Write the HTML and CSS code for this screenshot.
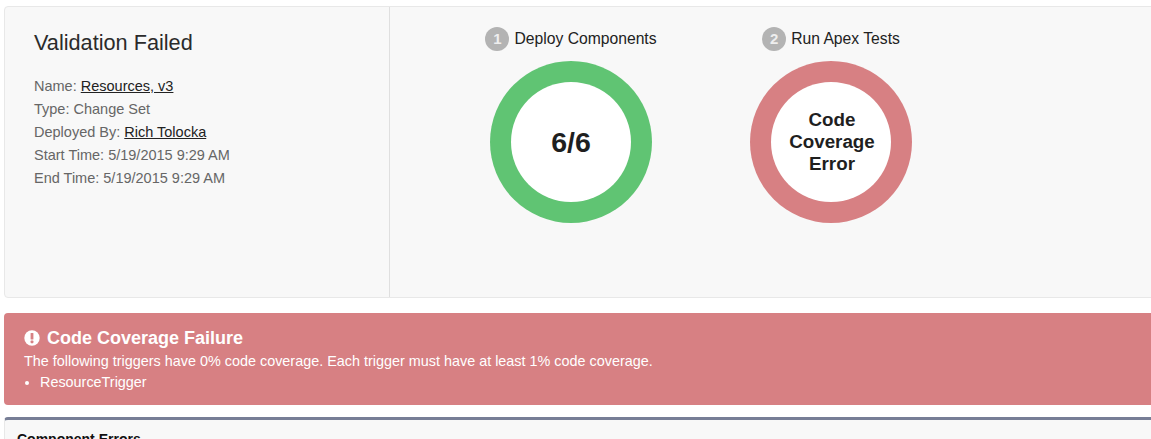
FILE: index.html
```html
<!DOCTYPE html>
<html lang="en">
<head>
    <meta charset="UTF-8">
    <title>Deployment Status</title>
    <link rel="stylesheet" href="styles.css">
</head>
<body>
<div class="status-panel">
    <div class="details">
        <h1>Validation Failed</h1>
        <div class="detail-row">Name: <a href="#">Resources, v3</a></div>
        <div class="detail-row">Type: Change Set</div>
        <div class="detail-row">Deployed By: <a href="#">Rich Tolocka</a></div>
        <div class="detail-row">Start Time: 5/19/2015 9:29 AM</div>
        <div class="detail-row">End Time: 5/19/2015 9:29 AM</div>
    </div>
    <div class="steps">
        <div class="step step-deploy">
            <div class="step-title"><span class="step-num">1</span>Deploy Components</div>
            <div class="ring ring-ok">
                <div class="ring-inner ring-count">6/6</div>
            </div>
        </div>
        <div class="step step-tests">
            <div class="step-title"><span class="step-num">2</span>Run Apex Tests</div>
            <div class="ring ring-fail">
                <div class="ring-inner ring-msg">Code Coverage Error</div>
            </div>
        </div>
    </div>
</div>

<div class="error-banner">
    <h2>
        <svg class="error-icon" width="16" height="16" viewBox="0 0 16 16">
            <circle cx="8" cy="8" r="7.7" fill="#fff"/>
            <rect x="6.6" y="3" width="2.8" height="6.6" rx="0.6" fill="#d78083"/>
            <rect x="6.6" y="10.6" width="2.8" height="2.6" rx="0.6" fill="#d78083"/>
        </svg>
        Code Coverage Failure
    </h2>
    <p>The following triggers have 0% code coverage. Each trigger must have at least 1% code coverage.</p>
    <ul>
        <li>ResourceTrigger</li>
    </ul>
</div>

<div class="errors-panel">
    <h3>Component Errors</h3>
</div>
</body>
</html>
```

FILE: styles.css
```css
html, body {
    height: 100%;
    overflow: hidden;
}

body {
    font-family: 'Liberation Sans', Arial, sans-serif;
    background-color: #fff;
    color: #222;
    margin: 0;
    padding: 6px 0 0 4px;
    box-sizing: border-box;
}

.status-panel {
    display: flex;
    height: 290px;
    margin-right: -10px;
    background-color: #f8f8f8;
    border: 1px solid #e8e8e8;
    border-radius: 4px;
}

.details {
    width: 385px;
    flex-shrink: 0;
    box-sizing: border-box;
    padding: 22px 0 0 29px;
    border-right: 1px solid #dfdfdf;
}

.details h1 {
    margin: 0 0 18px;
    font-size: 21.7px;
    font-weight: normal;
    line-height: 28px;
    color: #2b2b2b;
}

.detail-row {
    font-size: 14.5px;
    line-height: 23px;
    color: #666;
}

.detail-row a {
    color: #222;
    text-decoration: underline;
}

.steps {
    display: flex;
    padding: 20px 0 0 100px;
}

.step {
    width: 162px;
}

.step-tests {
    margin-left: 98px;
}

.step-title {
    display: flex;
    align-items: center;
    justify-content: center;
    height: 24px;
    margin-bottom: 10px;
    font-size: 15.7px;
    white-space: nowrap;
    color: #222;
}

.step-num {
    width: 24px;
    height: 24px;
    margin-right: 5px;
    flex-shrink: 0;
    border-radius: 50%;
    background-color: #b3b3b3;
    color: #eee;
    font-size: 15px;
    font-weight: bold;
    line-height: 24px;
    text-align: center;
}

.ring {
    width: 162px;
    height: 162px;
    box-sizing: border-box;
    padding: 21px;
    border-radius: 50%;
}

.ring-ok {
    background-color: #60c473;
}

.ring-fail {
    background-color: #d78083;
}

.ring-inner {
    width: 120px;
    height: 120px;
    display: flex;
    align-items: center;
    justify-content: center;
    box-sizing: border-box;
    border-radius: 50%;
    background-color: #fff;
    font-weight: bold;
    text-align: center;
    color: #1f1f1f;
}

.ring-count {
    font-size: 28.5px;
}

.ring-msg {
    padding: 0 11px 1px 13px;
    font-size: 18.8px;
    line-height: 22px;
}

.error-banner {
    height: 92px;
    margin: 15px -10px 0 0;
    box-sizing: border-box;
    padding: 15px 20px 0;
    background-color: #d78083;
    border-radius: 4px;
    color: #fff;
}

.error-banner h2 {
    display: flex;
    align-items: center;
    margin: 0;
    font-size: 18px;
    line-height: 20px;
}

.error-icon {
    margin-right: 7px;
}

.error-banner p {
    margin: 3px 0 0;
    font-size: 14.4px;
    line-height: 20px;
}

.error-banner ul {
    margin: 1px 0 0;
    padding-left: 16px;
    font-size: 14.4px;
    line-height: 20px;
}

.errors-panel {
    height: 60px;
    margin: 12px -10px 0 0;
    box-sizing: border-box;
    padding: 9px 12px;
    background-color: #f8f8f8;
    border: 1px solid #e8e8e8;
    border-top: 3px solid #777e96;
    border-radius: 4px;
}

.errors-panel h3 {
    margin: 0;
    font-size: 14px;
    line-height: 20px;
    color: #111;
}
```
